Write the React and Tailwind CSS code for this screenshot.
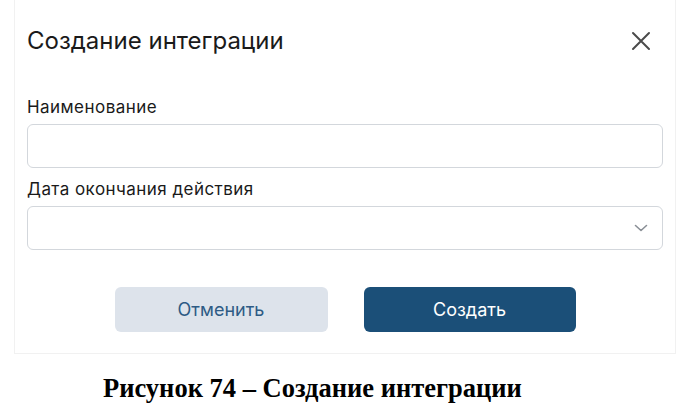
import React from "react";

export default function App() {
  return (
    <div className="w-[678px] h-[408px] bg-white overflow-hidden" style={{ fontFamily: "Inter, 'Noto Sans', sans-serif" }}>
      <div className="ml-[14px] w-[662px] h-[354px] border-x border-b border-[#f1f1f1] px-[12px] pt-[26px] flex flex-col">
        <div className="flex items-center justify-between h-[30px]">
          <div className="text-[24px] text-[#1a1a1a] leading-none">Создание интеграции</div>
          <svg width="20" height="20" viewBox="0 0 20 20" className="mr-[12px]">
            <path d="M2 2L18 18M18 2L2 18" stroke="#4a4a4a" strokeWidth="2" strokeLinecap="round" />
          </svg>
        </div>
        <div className="mt-[41px] text-[17px] tracking-[0.45px] leading-[20px] text-[#1a1a1a]">Наименование</div>
        <div className="mt-[7px] h-[44px] rounded-[6px] border border-[#d3d7dc] bg-white"></div>
        <div className="mt-[11px] text-[17px] tracking-[0.45px] leading-[20px] text-[#1a1a1a]">Дата окончания действия</div>
        <div className="mt-[7px] h-[44px] rounded-[6px] border border-[#d3d7dc] bg-white flex items-center justify-end pr-[14px]">
          <svg width="14" height="8" viewBox="0 0 14 8">
            <path d="M1.5 1.5L7 6.5L12.5 1.5" stroke="#8a8f96" strokeWidth="1.6" fill="none" strokeLinecap="round" strokeLinejoin="round" />
          </svg>
        </div>
        <div className="mt-[37px] flex justify-center gap-[36px]">
          <div className="w-[213px] h-[45px] rounded-[6px] bg-[#dde3eb] flex items-center justify-center text-[18px] text-[#2e5b85]">Отменить</div>
          <div className="w-[212px] h-[45px] rounded-[6px] bg-[#1b4f78] flex items-center justify-center text-[18px] text-white">Создать</div>
        </div>
      </div>
      <div className="pl-[103px] pt-[21px] text-[26.5px] font-bold text-black leading-none whitespace-nowrap" style={{ fontFamily: "'Liberation Serif', serif" }}>
        Рисунок 74 – Создание интеграции
      </div>
    </div>
  );
}
